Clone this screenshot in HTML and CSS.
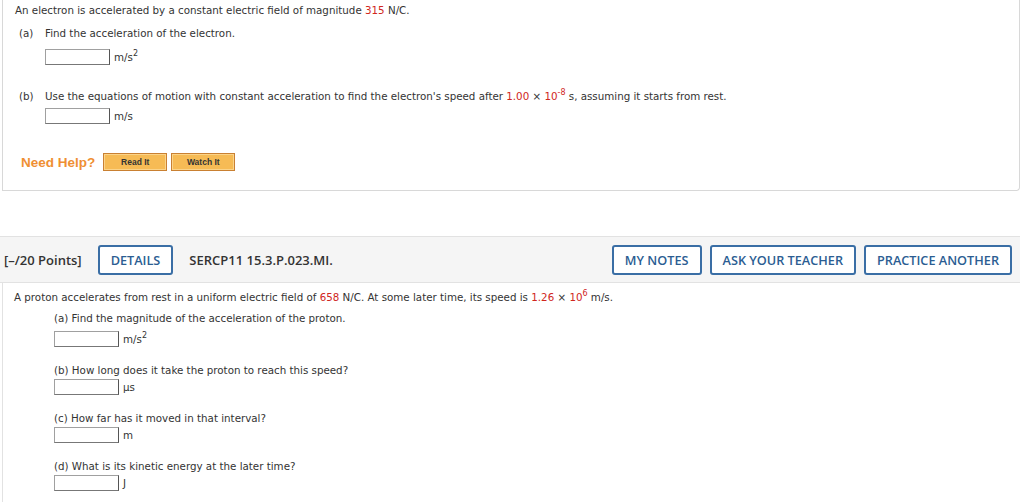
FILE: index.html
```html
<!DOCTYPE html>
<html>
<head>
<meta charset="utf-8">
<link rel="stylesheet" href="styles.css">
</head>
<body>
<div class="card">
  <p class="stem">An electron is accelerated by a constant electric field of magnitude <span class="red">315</span> N/C.</p>
  <div class="part parta">
    <div class="q"><span class="lbl">(a)</span><span>Find the acceleration of the electron.</span></div>
    <div class="ans anssup"><span class="box"></span><span class="unit">m/s<sup>2</sup></span></div>
  </div>
  <div class="part partb">
    <div class="q"><span class="lbl">(b)</span><span>Use the equations of motion with constant acceleration to find the electron's speed after <span class="red">1.00</span> × <span class="red">10<sup>-8</sup></span> s, assuming it starts from rest.</span></div>
    <div class="ans"><span class="box"></span><span class="unit">m/s</span></div>
  </div>
  <div class="help">
    <span class="needhelp">Need Help?</span>
    <span class="hbtn">Read It</span>
    <span class="hbtn">Watch It</span>
  </div>
</div>

<div class="qhead">
  <span class="points">[–/20 Points]</span>
  <span class="btn">DETAILS</span>
  <span class="code">SERCP11 15.3.P.023.MI.</span>
  <span class="spacer"></span>
  <span class="btn">MY NOTES</span>
  <span class="btn">ASK YOUR TEACHER</span>
  <span class="btn">PRACTICE ANOTHER</span>
</div>
<div class="qbody">
  <p class="stem2">A proton accelerates from rest in a uniform electric field of <span class="red">658</span> N/C. At some later time, its speed is <span class="red">1.26</span> × <span class="red">10<sup>6</sup></span> m/s.</p>
  <div class="sub sub-first">
    <div class="sq">(a) Find the magnitude of the acceleration of the proton.</div>
    <div class="ans2 anssup2"><span class="box"></span><span class="unit">m/s<sup>2</sup></span></div>
  </div>
  <div class="sub">
    <div class="sq">(b) How long does it take the proton to reach this speed?</div>
    <div class="ans2"><span class="box"></span><span class="unit">µs</span></div>
  </div>
  <div class="sub">
    <div class="sq">(c) How far has it moved in that interval?</div>
    <div class="ans2"><span class="box"></span><span class="unit">m</span></div>
  </div>
  <div class="sub">
    <div class="sq">(d) What is its kinetic energy at the later time?</div>
    <div class="ans2"><span class="box"></span><span class="unit">J</span></div>
  </div>
</div>
</body>
</html>
```
FILE: styles.css
```css
* { box-sizing: border-box; }
body {
  margin: 0;
  background: #fff;
  font-family: "DejaVu Sans", Verdana, sans-serif;
  font-size: 10.3px;
  color: #333;
  overflow: hidden;
}
p { margin: 0; }
.red { color: #d0261d; }
sup { font-size: 8px; vertical-align: 5px; line-height: 0; }

.card {
  margin: 0 4px 0 2px;
  border: 1px solid #d8d8d8;
  border-top: none;
  border-radius: 0 0 4px 0;
  padding: 4px 0 0 12px;
  height: 191px;
}
.stem { line-height: 13px; }
.part { padding-left: 4px; }
.parta { margin-top: 10px; }
.partb { margin-top: 25px; }
.q { display: flex; line-height: 13px; }
.lbl { width: 26px; flex: none; }
.ans { display: flex; align-items: center; margin: 5px 0 0 26px; }
.anssup { margin-top: 9px; }
.box {
  display: inline-block;
  width: 65px;
  height: 16px;
  border: 1px solid #a0a0a0;
  border-right-color: #555;
  border-bottom-color: #777;
  background: #fff;
  flex: none;
}
.unit { margin-left: 4px; line-height: 13px; }

.help {
  display: flex;
  align-items: center;
  margin-top: 29px;
  padding-left: 6px;
  gap: 4px;
}
.needhelp {
  font-family: "Liberation Sans", Arial, sans-serif;
  font-weight: bold;
  font-size: 13.5px;
  color: #ef8f33;
  margin-right: 4px;
}
.hbtn {
  width: 64px;
  height: 18px;
  background: #f6bb55;
  border: 1px solid #c98032;
  box-shadow: inset 0 0 0 1px #fbd48a;
  font-family: "Liberation Sans", Arial, sans-serif;
  font-weight: bold;
  font-size: 8.5px;
  color: #333;
  display: flex;
  align-items: center;
  justify-content: center;
}

.qhead {
  margin-top: 45px;
  margin-right: 4px;
  height: 47px;
  background: #f5f5f5;
  border-top: 1px solid #e2e2e2;
  border-bottom: 1px solid #e2e2e2;
  display: flex;
  align-items: center;
  padding-left: 4px;
  padding-right: 8px;
  font-family: "Open Sans", sans-serif;
  font-size: 13px;
  font-weight: 600;
  color: #333;
}
.points { margin-right: 16px; }
.code { margin-left: 16px; }
.spacer { flex: 1; }
.btn {
  height: 30px;
  border: 2px solid #3a6ea5;
  border-radius: 3px;
  background: #fff;
  color: #2b5d92;
  font-size: 12.7px;
  padding: 0 11px;
  display: flex;
  align-items: center;
  margin-left: 8px;
}
.qhead .btn:nth-child(2) { margin-left: 0; }
.qbody {
  margin-left: 2px;
  border-left: 1px solid #e2e2e2;
  padding: 8px 0 0 11px;
  height: 230px;
}
.stem2 { line-height: 13px; }
.sub { padding-left: 40px; margin-top: 17px; }
.sub-first { margin-top: 8px; }
.sq { line-height: 13px; }
.ans2 { display: flex; align-items: center; margin-top: 2px; }
.anssup2 { margin-top: 6px; }
```
